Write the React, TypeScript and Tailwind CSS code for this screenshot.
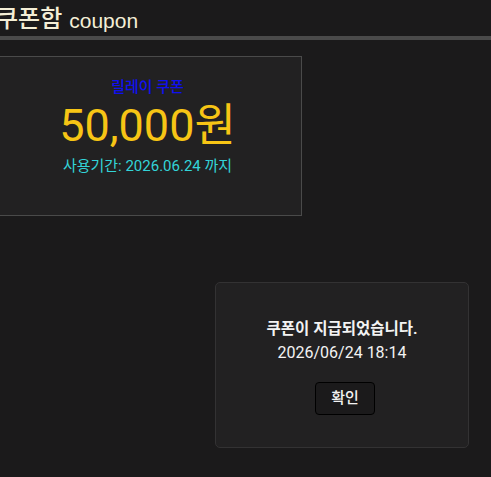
export default function App() {
  return (
    <div className="relative h-[477px] w-[491px] overflow-hidden bg-[#1b1a1b] font-['Roboto','Noto_Sans_CJK_KR',sans-serif]">
      <header className="flex h-[36px] items-end -ml-[4px] pb-[5px]">
        <span className="text-[24px] leading-none font-medium text-[#f4eed6]">쿠폰함</span>
        <span className="ml-[7px] text-[21px] leading-none font-['Liberation_Sans',sans-serif] text-[#f4eed6]">coupon</span>
      </header>
      <div className="h-[4px] bg-[#4a4a4a]" />

      <div className="mt-[16px] -ml-[7px] flex h-[160px] w-[309px] flex-col items-center border border-[#4a4a4a] bg-[#222122] pt-[19px]">
        <p className="text-[15px] leading-[22px] font-medium text-[#1010f0]">릴레이 쿠폰</p>
        <p className="mt-[2px] text-[45px] leading-[52px] text-[#f7c515]">50,000원</p>
        <p className="mt-[4px] text-[15px] leading-[20px] text-[#33d4d8]">사용기간: 2026.06.24 까지</p>
      </div>

      <div className="absolute left-[215px] top-[282px] flex h-[166px] w-[254px] flex-col items-center rounded-[5px] border border-[#333233] bg-[#222122] pt-[35px]">
        <p className="text-[15.5px] leading-[23px] font-bold text-[#f3f3f3]">쿠폰이 지급되었습니다.</p>
        <p className="text-[16px] leading-[23px] text-[#f3f3f3]">2026/06/24 18:14</p>
        <button className="ml-[6px] mt-[18px] h-[33px] w-[60px] rounded-[4px] border border-black bg-[#1b1a1b] text-[15px] font-medium text-[#f3f3f3]">
          확인
        </button>
      </div>
    </div>
  );
}
